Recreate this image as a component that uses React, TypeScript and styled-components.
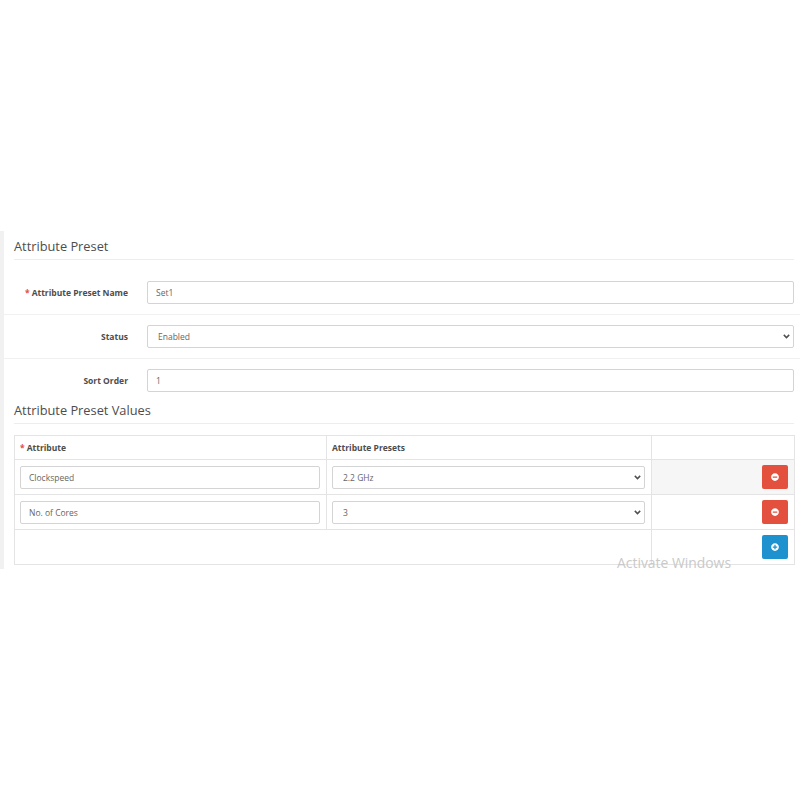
import React from 'react';
import styled, { createGlobalStyle, css } from 'styled-components';
import { FaMinusCircle, FaPlusCircle } from 'react-icons/fa';

const GlobalStyle = createGlobalStyle`
  html, body {
    margin: 0;
    background: #fff;
    font-family: "Open Sans", "Liberation Sans", sans-serif;
    color: #4d4d4d;
  }
  * {
    box-sizing: border-box;
  }
`;

const chevron = `url("data:image/svg+xml,%3Csvg xmlns='http://www.w3.org/2000/svg' width='7' height='5' viewBox='0 0 7 5'%3E%3Cpath d='M0.8 0.9 3.5 3.6 6.2 0.9' fill='none' stroke='%23505050' stroke-width='1.5'/%3E%3C/svg%3E")`;

const Page = styled.div`
  position: relative;
  width: 800px;
  height: 800px;
  padding-top: 231px;
`;

const Content = styled.div`
  height: 338px;
  border-left: 4px solid #f1f1f1;
`;

const Heading = styled.h2<{ $second?: boolean }>`
  margin: 0 6px 0 10px;
  height: ${({ $second }) => ($second ? '32px' : '29px')};
  padding-top: ${({ $second }) => ($second ? '8px' : '5px')};
  font-size: 12.8px;
  line-height: 20px;
  font-weight: 400;
  color: #4d4d4d;
  border-bottom: 1px solid #ededed;
`;

const FormBody = styled.div`
  padding-top: 11px;
`;

const FormRow = styled.div<{ $last?: boolean }>`
  display: grid;
  grid-template-columns: 124px 647px;
  column-gap: 19px;
  align-items: center;
  padding: 10px 0;
  border-bottom: 1px solid #f1f1f1;
  ${({ $last }) =>
    $last &&
    css`
      padding-bottom: 0;
      border-bottom: none;
    `}
`;

const Label = styled.label`
  text-align: right;
  font-size: 8.5px;
  font-weight: 700;
  color: #4d4d4d;
`;

const Required = styled.span`
  color: #e3503e;
  margin-right: 2px;
`;

const TextField = styled.input`
  display: block;
  width: 100%;
  height: 23px;
  padding: 0 8px;
  border: 1px solid #d4d4d4;
  border-radius: 2px;
  background: #fff;
  font-family: inherit;
  font-size: 8.5px;
  color: #666;
`;

const SelectField = styled.select`
  display: block;
  width: 100%;
  height: 23px;
  padding: 0 10px;
  border: 1px solid #d4d4d4;
  border-radius: 2px;
  appearance: none;
  background: #fff ${chevron} no-repeat right 3.5px center;
  font-family: inherit;
  font-size: 8.5px;
  color: #666;
`;

const Table = styled.table`
  width: 780px;
  margin: 11px 0 0 10px;
  border-collapse: collapse;
  table-layout: fixed;
`;

const HeadCell = styled.th`
  height: 24px;
  padding: 0 5px;
  border: 1px solid #e4e4e4;
  text-align: left;
  font-size: 8.5px;
  font-weight: 700;
  color: #4d4d4d;
`;

const Cell = styled.td<{ $shaded?: boolean }>`
  height: 35px;
  padding: 0 6px 0 5px;
  border: 1px solid #e4e4e4;
  background: ${({ $shaded }) => ($shaded ? '#f6f6f6' : '#fff')};
`;

const ActionCell = styled(Cell)`
  text-align: right;
`;

const IconButton = styled.button<{ $color: string }>`
  display: inline-flex;
  align-items: center;
  justify-content: center;
  width: 26px;
  height: 24px;
  padding: 0;
  border: none;
  border-radius: 2px;
  background: ${({ $color }) => $color};
  color: #fff;
  font-size: 8px;
  vertical-align: middle;
`;

const Watermark = styled.div`
  position: absolute;
  left: 617px;
  top: 554px;
  font-size: 13.9px;
  line-height: 18px;
  color: #c9c9c9;
  pointer-events: none;
`;

const rows = [
  { attribute: 'Clockspeed', preset: '2.2 GHz', shaded: true },
  { attribute: 'No. of Cores', preset: '3', shaded: false },
];

export default function App() {
  return (
    <Page>
      <GlobalStyle />
      <Content>
        <Heading>Attribute Preset</Heading>
        <FormBody>
          <FormRow>
            <Label><Required>*</Required>Attribute Preset Name</Label>
            <TextField defaultValue="Set1" />
          </FormRow>
          <FormRow>
            <Label>Status</Label>
            <SelectField defaultValue="Enabled">
              <option>Enabled</option>
              <option>Disabled</option>
            </SelectField>
          </FormRow>
          <FormRow $last>
            <Label>Sort Order</Label>
            <TextField defaultValue="1" />
          </FormRow>
        </FormBody>
        <Heading $second>Attribute Preset Values</Heading>
        <Table>
          <colgroup>
            <col style={{ width: 312 }} />
            <col style={{ width: 325 }} />
            <col style={{ width: 143 }} />
          </colgroup>
          <thead>
            <tr>
              <HeadCell><Required>*</Required>Attribute</HeadCell>
              <HeadCell>Attribute Presets</HeadCell>
              <HeadCell />
            </tr>
          </thead>
          <tbody>
            {rows.map((row) => (
              <tr key={row.attribute}>
                <Cell>
                  <TextField defaultValue={row.attribute} />
                </Cell>
                <Cell>
                  <SelectField defaultValue={row.preset}>
                    <option>{row.preset}</option>
                  </SelectField>
                </Cell>
                <ActionCell $shaded={row.shaded}>
                  <IconButton $color="#e3503e"><FaMinusCircle /></IconButton>
                </ActionCell>
              </tr>
            ))}
            <tr>
              <Cell colSpan={2} />
              <ActionCell>
                <IconButton $color="#1e91cf"><FaPlusCircle /></IconButton>
              </ActionCell>
            </tr>
          </tbody>
        </Table>
      </Content>
      <Watermark>Activate Windows</Watermark>
    </Page>
  );
}
